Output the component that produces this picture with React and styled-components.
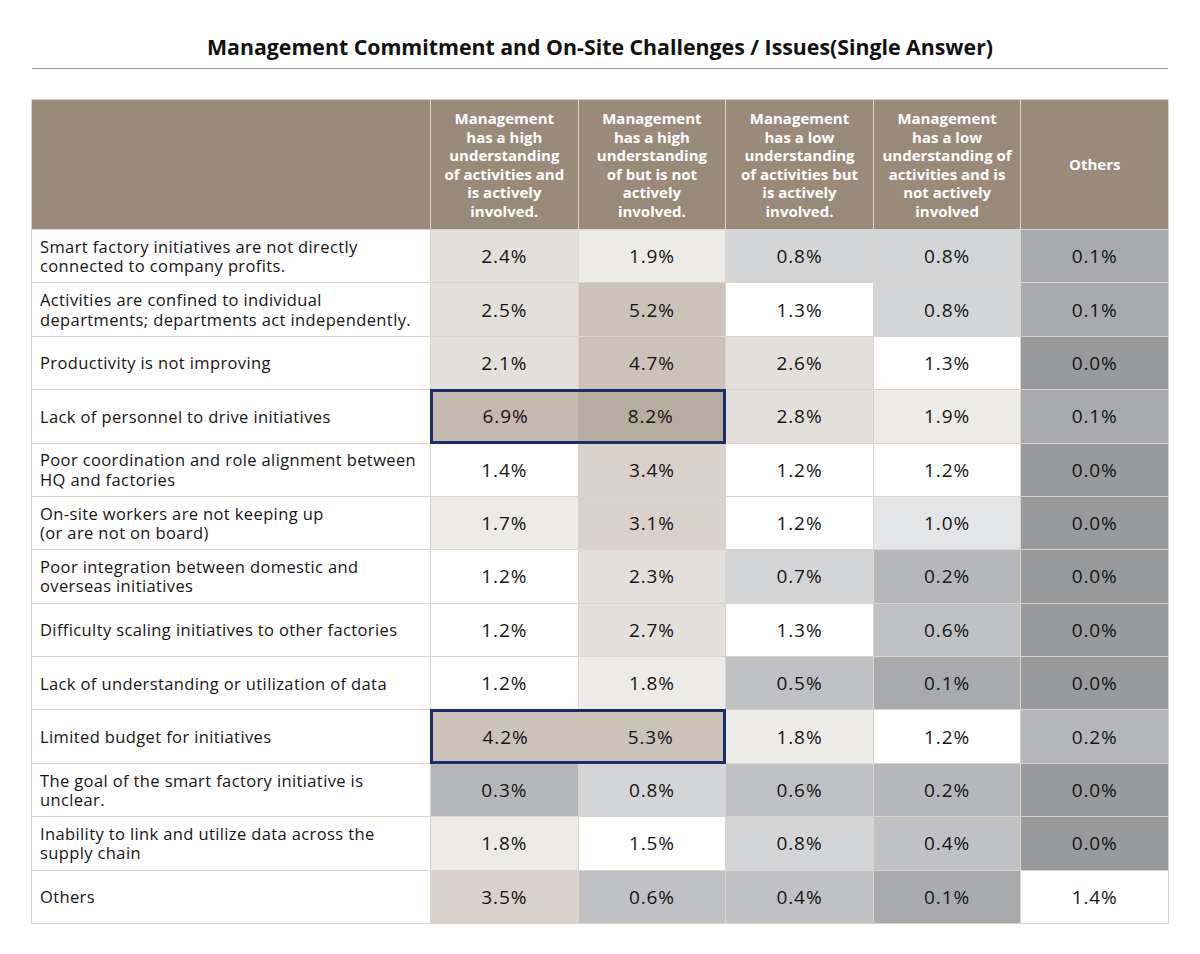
import styled, { createGlobalStyle } from "styled-components";

const GlobalStyle = createGlobalStyle`
  body {
    margin: 0;
    background: #ffffff;
    font-family: "Open Sans", "Liberation Sans", sans-serif;
  }
`

const Page = styled.div`
  width: 1200px;
  padding: 36px 31px 30px;
  box-sizing: border-box;
`

const Title = styled.h1`
  margin: 0;
  font-size: 21.3px;
  line-height: 22px;
  font-weight: 700;
  text-align: center;
  color: #111111;
`

const Rule = styled.div`
  margin: 10px 1px 0;
  border-top: 1px solid #a59886;
`

const Table = styled.div`
  margin-top: 30px;
  display: grid;
  grid-template-columns: 398px repeat(5, 1fr);
  grid-template-rows: 129px repeat(13, 1fr);
  gap: 1px;
  padding: 1px;
  height: 825px;
  box-sizing: border-box;
  background: #ddd4c6;
`

const HeadCell = styled.div`
  background: #9a8a7a;
  color: #ffffff;
  font-size: 15px;
  line-height: 18.5px;
  font-weight: 700;
  display: flex;
  align-items: center;
  justify-content: center;
  text-align: center;
  padding: 0 2px;
  white-space: pre;
`

const Label = styled.div`
  background: #ffffff;
  color: #151515;
  font-size: 16.5px;
  line-height: 19.5px;
  letter-spacing: 0.38px;
  display: flex;
  align-items: center;
  padding: 0 8px;
  white-space: pre;
`

const Value = styled.div`
  background: ${(p) => p.$bg};
  color: #151515;
  font-size: 19px;
  letter-spacing: 0.9px;
  display: flex;
  align-items: center;
  justify-content: center;
  flex: 1;
`

const Highlight = styled.div`
  grid-column: span 2;
  display: flex;
  margin: -1px;
  border: 3px solid #1b2d6b;
`

const heads = [
  "Management\nhas a high\nunderstanding\nof activities and\nis actively\ninvolved.",
  "Management\nhas a high\nunderstanding\nof but is not\nactively\ninvolved.",
  "Management\nhas a low\nunderstanding\nof activities but\nis actively\ninvolved.",
  "Management\nhas a low\nunderstanding of\nactivities and is\nnot actively\ninvolved",
  "Others",
]

const rows = [
  { label: "Smart factory initiatives are not directly\nconnected to company profits.", values: [2.4, 1.9, 0.8, 0.8, 0.1] },
  { label: "Activities are confined to individual\ndepartments; departments act independently.", values: [2.5, 5.2, 1.3, 0.8, 0.1] },
  { label: "Productivity is not improving", values: [2.1, 4.7, 2.6, 1.3, 0.0] },
  { label: "Lack of personnel to drive initiatives", values: [6.9, 8.2, 2.8, 1.9, 0.1], mark: true },
  { label: "Poor coordination and role alignment between\nHQ and factories", values: [1.4, 3.4, 1.2, 1.2, 0.0] },
  { label: "On-site workers are not keeping up\n(or are not on board)", values: [1.7, 3.1, 1.2, 1.0, 0.0] },
  { label: "Poor integration between domestic and\noverseas initiatives", values: [1.2, 2.3, 0.7, 0.2, 0.0] },
  { label: "Difficulty scaling initiatives to other factories", values: [1.2, 2.7, 1.3, 0.6, 0.0] },
  { label: "Lack of understanding or utilization of data", values: [1.2, 1.8, 0.5, 0.1, 0.0] },
  { label: "Limited budget for initiatives", values: [4.2, 5.3, 1.8, 1.2, 0.2], mark: true },
  { label: "The goal of the smart factory initiative is\nunclear.", values: [0.3, 0.8, 0.6, 0.2, 0.0] },
  { label: "Inability to link and utilize data across the\nsupply chain", values: [1.8, 1.5, 0.8, 0.4, 0.0] },
  { label: "Others", values: [3.5, 0.6, 0.4, 0.1, 1.4] },
]

// heatmap shade by value
const shade = (v) => {
  if (v === 0) return "#989a9c";
  if (v <= 0.1) return "#a8aaad";
  if (v <= 0.3) return "#b6b7ba";
  if (v <= 0.6) return "#c0c1c4";
  if (v <= 0.8) return "#d4d5d7";
  if (v <= 1.0) return "#e4e5e7";
  if (v <= 1.5) return "#ffffff";
  if (v <= 1.9) return "#edebe7";
  if (v <= 2.8) return "#e3dfda";
  if (v <= 3.5) return "#d9d2cc";
  if (v <= 5.3) return "#cbc3ba";
  if (v <= 6.9) return "#c3b9af";
  return "#b8aca1";
}

const ValueCell = ({ v }) => <Value $bg={shade(v)}>{v.toFixed(1)}%</Value>

const App = () => {
  return (
    <>
      <GlobalStyle />
      <Page>
        <Title>Management Commitment and On-Site Challenges / Issues(Single Answer)</Title>
        <Rule />
        <Table>
          <HeadCell />
          {heads.map((text, i) => (
            <HeadCell key={i}>{text}</HeadCell>
          ))}
          {rows.map((row, r) => (
            <>
              <Label key={`l${r}`}>{row.label}</Label>
              {row.mark ? (
                <>
                  <Highlight key={`h${r}`}>
                    <ValueCell v={row.values[0]} />
                    <ValueCell v={row.values[1]} />
                  </Highlight>
                  {row.values.slice(2).map((v, c) => (
                    <ValueCell key={`v${r}-${c}`} v={v} />
                  ))}
                </>
              ) : (
                row.values.map((v, c) => <ValueCell key={`v${r}-${c}`} v={v} />)
              )}
            </>
          ))}
        </Table>
      </Page>
    </>
  )
}

export default App
